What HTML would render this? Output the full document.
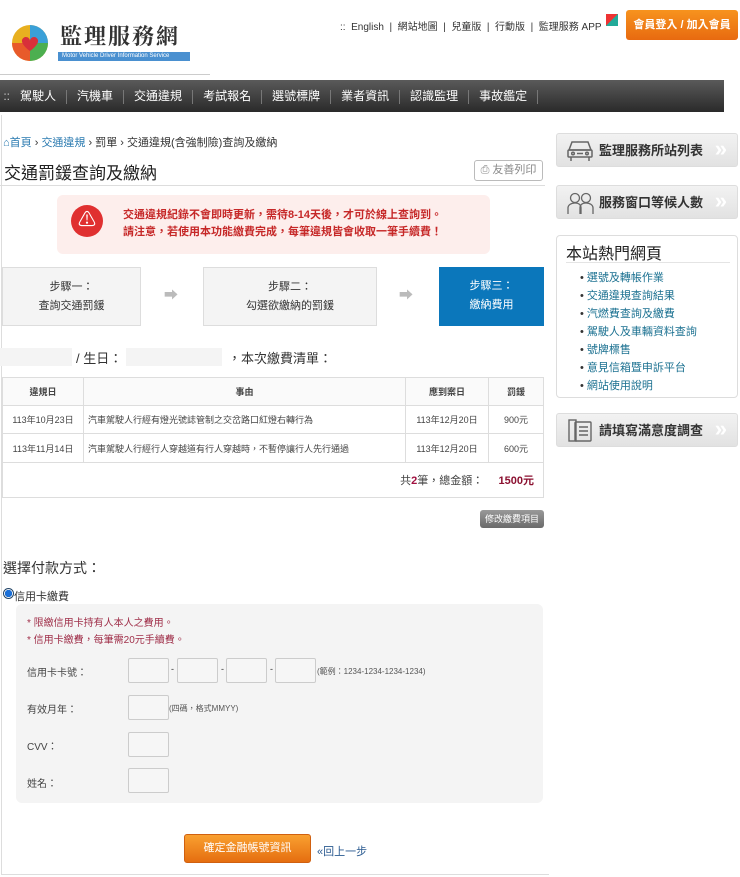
<!DOCTYPE html>
<html><head><meta charset="utf-8"><style>
*{margin:0;padding:0;box-sizing:border-box}
body{width:740px;height:877px;position:relative;background:#fff;font-family:"Liberation Sans","Noto Sans CJK TC",sans-serif;color:#333;overflow:hidden}
.a{position:absolute;white-space:nowrap}
.nav span{margin:0 10px;color:#fff;font-size:12px}
.nav i{display:inline-block;width:1px;height:14px;background:#777;vertical-align:middle}
.side{position:absolute;left:556px;width:182px;height:34px;background:linear-gradient(#f2f2f2,#e2e2e2);border:1px solid #ddd;border-radius:3px;font-size:13px;font-weight:bold;color:#333}
.side .t{position:absolute;left:42px;top:0;line-height:34px}
.side svg{position:absolute;left:9px;top:5px}
.side b{position:absolute;right:10px;top:2px;color:#fff;font-size:22px;font-weight:bold}
td,th{border:1px solid #ddd;font-size:9px;color:#444;text-align:center}
th{font-weight:bold;background:#fafafa}
.inp{position:absolute;width:41px;height:25px;border:1px solid #ccc;background:#f6f6f6;border-radius:2px}
.lab{position:absolute;left:27px;font-size:10px;color:#444}
</style></head><body>
<div class="a" style="left:1px;top:115px;width:1px;height:760px;background:#ddd"></div>
<div class="a" style="left:1px;top:874px;width:548px;height:1px;background:#ddd"></div>
<svg class="a" style="left:10px;top:22px" width="40" height="42" viewBox="0 0 40 42"><circle cx="20" cy="21" r="18" fill="#e8b020"/><path d="M20 3 A18 18 0 0 1 38 21 L20 21Z" fill="#3aa0d8"/><path d="M38 21 A18 18 0 0 1 20 39 L20 21Z" fill="#4caf50"/><path d="M20 39 A18 18 0 0 1 2 21 L20 21Z" fill="#e85a2a"/><path d="M12 18c2-5 8-3 8 1 0-4 6-6 8-1 1 5-8 11-8 11s-9-6-8-11z" fill="#d8303a"/></svg>
<div class="a" style="left:60px;top:20px;font-size:22px;font-weight:bold;color:#333;font-family:'Noto Serif CJK SC',serif;letter-spacing:2px">監理服務網</div>
<div class="a" style="left:58px;top:52px;width:132px;height:9px;background:#4a90d0;font-size:6px;color:#fff;padding-left:4px;line-height:9px">Motor Vehicle Driver Information Service</div>
<div class="a" style="left:0;top:74px;width:210px;height:1px;background:#ccc"></div>
<div class="a" style="left:340px;top:18px;font-size:10px;color:#333">::&nbsp; English &nbsp;|&nbsp; 網站地圖 &nbsp;|&nbsp; 兒童版 &nbsp;|&nbsp; 行動版 &nbsp;|&nbsp; 監理服務 APP</div>
<div class="a" style="left:606px;top:14px;width:12px;height:12px;background:linear-gradient(135deg,#e33 50%,#2a9 50%)"></div>
<div class="a" style="left:626px;top:10px;width:112px;height:30px;background:linear-gradient(#f7931e,#e86a10);border-radius:3px;color:#fff;font-size:11px;font-weight:bold;text-align:center;line-height:30px">會員登入 / 加入會員</div>
<div class="a nav" style="left:0;top:80px;width:724px;height:32px;background:linear-gradient(#5a5a5a,#2a2a2a);line-height:32px;font-size:12px;color:#ccc">&nbsp;::<span>駕駛人</span><i></i><span>汽機車</span><i></i><span>交通違規</span><i></i><span>考試報名</span><i></i><span>選號標牌</span><i></i><span>業者資訊</span><i></i><span>認識監理</span><i></i><span>事故鑑定</span><i></i></div>
<div class="a" style="left:3px;top:134px;font-size:11px;color:#333"><span style="color:#2a7ab0">⌂首頁</span> › <span style="color:#2a7ab0">交通違規</span> › 罰單 › 交通違規(含強制險)查詢及繳納</div>
<div class="a" style="left:4px;top:159px;font-size:17px;color:#222">交通罰鍰查詢及繳納</div>
<div class="a" style="left:474px;top:160px;width:69px;height:21px;border:1px solid #bbb;border-radius:3px;font-size:11px;color:#888;text-align:center;line-height:19px">⎙ 友善列印</div>
<div class="a" style="left:0;top:185px;width:545px;height:1px;background:#ddd"></div>
<div class="a" style="left:57px;top:195px;width:433px;height:59px;background:#fdeeec;border-radius:6px"></div>
<div class="a" style="left:71px;top:205px;width:32px;height:32px;border-radius:50%;background:#e03030;color:#fff;text-align:center;font-size:18px;line-height:30px">⚠</div>
<div class="a" style="left:123px;top:207px;font-size:11px;font-weight:bold;color:#c62828;line-height:17px">交通違規紀錄不會即時更新，需待8-14天後，才可於線上查詢到。<br>請注意，若使用本功能繳費完成，每筆違規皆會收取一筆手續費！</div>
<div class="a" style="left:2px;top:267px;width:139px;height:59px;background:#f4f4f4;border:1px solid #ddd;text-align:center;font-size:11px;line-height:19px;padding-top:10px">步驟一：<br>查詢交通罰鍰</div>
<div class="a" style="left:164px;top:285px;color:#bbb;font-size:14px">➡</div>
<div class="a" style="left:203px;top:267px;width:174px;height:59px;background:#f4f4f4;border:1px solid #ddd;text-align:center;font-size:11px;line-height:19px;padding-top:10px">步驟二：<br>勾選欲繳納的罰鍰</div>
<div class="a" style="left:399px;top:285px;color:#bbb;font-size:14px">➡</div>
<div class="a" style="left:439px;top:267px;width:105px;height:59px;background:#0b77bb;color:#fff;text-align:center;font-size:11px;line-height:19px;padding-top:10px">步驟三：<br>繳納費用</div>
<div class="a" style="left:0;top:348px;width:72px;height:18px;background:#f4f4f4"></div>
<div class="a" style="left:126px;top:348px;width:96px;height:18px;background:#f4f4f4"></div>
<div class="a" style="left:76px;top:348px;font-size:13px;color:#333">/ 生日：</div>
<div class="a" style="left:228px;top:348px;font-size:13px;color:#333">，本次繳費清單：</div>
<table class="a" style="left:2px;top:377px;width:542px;border-collapse:collapse">
<tr style="height:28px"><th style="width:81px">違規日</th><th>事由</th><th style="width:83px">應到案日</th><th style="width:55px">罰鍰</th></tr>
<tr style="height:28px"><td>113年10月23日</td><td style="text-align:left;padding-left:4px">汽車駕駛人行經有燈光號誌管制之交岔路口紅燈右轉行為</td><td>113年12月20日</td><td>900元</td></tr>
<tr style="height:29px"><td>113年11月14日</td><td style="text-align:left;padding-left:4px">汽車駕駛人行經行人穿越道有行人穿越時，不暫停讓行人先行通過</td><td>113年12月20日</td><td>600元</td></tr>
<tr style="height:35px"><td colspan="4" style="text-align:right;padding-right:9px;font-size:11px">共<b style="color:#a01040">2</b>筆，總金額： &nbsp; &nbsp; <b style="color:#8b1030">1500元</b></td></tr>
</table>
<div class="a" style="left:480px;top:510px;width:64px;height:18px;background:linear-gradient(#999,#6a6a6a);border-radius:3px;color:#fff;font-size:9px;text-align:center;line-height:18px">修改繳費項目</div>
<div class="a" style="left:3px;top:558px;font-size:14px;color:#333">選擇付款方式：</div>
<div class="a" style="left:3px;top:588px;width:11px;height:11px;border-radius:50%;border:1px solid #246;background:radial-gradient(#1a6fd8 55%,#fff 60%)"></div>
<div class="a" style="left:14px;top:588px;font-size:11px;color:#333">信用卡繳費</div>
<div class="a" style="left:16px;top:604px;width:527px;height:199px;background:#f4f4f4;border-radius:6px"></div>
<div class="a" style="left:27px;top:615px;font-size:10px;color:#a0304a;line-height:17px">* 限繳信用卡持有人本人之費用。<br>* 信用卡繳費，每筆需20元手續費。</div>
<div class="lab" style="top:664px">信用卡卡號：</div>
<div class="inp" style="left:128px;top:658px"></div><div class="a" style="left:171px;top:664px;font-size:9px">-</div>
<div class="inp" style="left:177px;top:658px"></div><div class="a" style="left:221px;top:664px;font-size:9px">-</div>
<div class="inp" style="left:226px;top:658px"></div><div class="a" style="left:270px;top:664px;font-size:9px">-</div>
<div class="inp" style="left:275px;top:658px"></div>
<div class="a" style="left:317px;top:666px;font-size:8px;color:#555">(範例：1234-1234-1234-1234)</div>
<div class="lab" style="top:701px">有效月年：</div>
<div class="inp" style="left:128px;top:695px"></div>
<div class="a" style="left:169px;top:703px;font-size:8px;color:#555">(四碼，格式MMYY)</div>
<div class="lab" style="top:738px">CVV：</div>
<div class="inp" style="left:128px;top:732px"></div>
<div class="lab" style="top:775px">姓名：</div>
<div class="inp" style="left:128px;top:768px"></div>
<div class="a" style="left:184px;top:834px;width:127px;height:29px;background:linear-gradient(#f9a030,#e56e10);border:1px solid #d06010;border-radius:3px;color:#fff;font-size:11px;text-align:center;line-height:27px">確定金融帳號資訊</div>
<div class="a" style="left:317px;top:843px;font-size:11px;color:#2a5a90">«回上一步</div>
<div class="side" style="top:133px"><svg width="28" height="24" viewBox="0 0 28 24" fill="none" stroke="#666" stroke-width="1.5"><path d="M6 3h16l3 8H3z"/><rect x="2" y="11" width="24" height="7" rx="1"/><path d="M5 18v4M23 18v4"/><circle cx="7" cy="14.5" r="1.3"/><circle cx="21" cy="14.5" r="1.3"/><path d="M11 14.5h6"/></svg><span class="t">監理服務所站列表</span><b>»</b></div>
<div class="side" style="top:185px"><svg width="28" height="24" viewBox="0 0 28 24" fill="none" stroke="#666" stroke-width="1.3"><circle cx="9" cy="7" r="4.5"/><circle cx="20" cy="7" r="4.5"/><path d="M2 23v-6c0-3 3-5 7-5s6 2 6 5v6M14 23v-6c0-3 2-5 6-5s7 2 7 5v6"/></svg><span class="t">服務窗口等候人數</span><b>»</b></div>
<div class="a" style="left:556px;top:235px;width:182px;height:163px;border:1px solid #ddd;border-radius:4px;background:#fff"></div>
<div class="a" style="left:566px;top:240px;font-size:16px;color:#222">本站熱門網頁</div>
<div class="a" style="left:566px;top:262px;width:164px;height:1px;background:#e4e4e4"></div>
<div class="a" style="left:580px;top:269px;font-size:11px;line-height:18px;color:#1a7090"><span style="color:#333">•</span> 選號及轉帳作業<br><span style="color:#333">•</span> 交通違規查詢結果<br><span style="color:#333">•</span> 汽燃費查詢及繳費<br><span style="color:#333">•</span> 駕駛人及車輛資料查詢<br><span style="color:#333">•</span> 號牌標售<br><span style="color:#333">•</span> 意見信箱暨申訴平台<br><span style="color:#333">•</span> 網站使用說明</div>
<div class="side" style="top:413px"><svg width="28" height="24" viewBox="0 0 28 24" fill="none" stroke="#666" stroke-width="1.4"><rect x="3" y="1" width="7" height="21"/><rect x="9" y="3" width="16" height="19" rx="1"/><path d="M13 8h9M13 12h9M13 16h9"/></svg><span class="t">請填寫滿意度調查</span><b>»</b></div>
</body></html>
